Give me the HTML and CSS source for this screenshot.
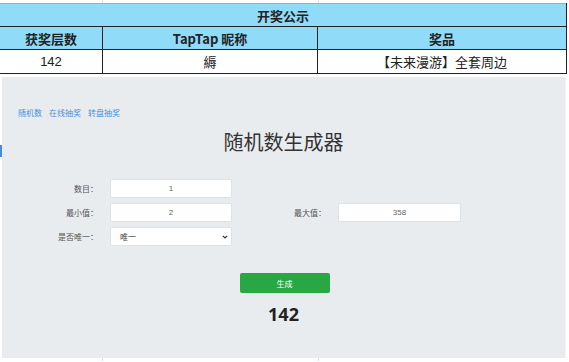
FILE: index.html
```html
<!DOCTYPE html>
<html lang="zh-CN">

<head>
    <meta charset="UTF-8">
    <meta name="viewport" content="width=device-width, initial-scale=1.0">
    <title>开奖公示</title>
    <link rel="stylesheet" href="styles.css">
</head>

<body>
    <div class='strip'>
        <span></span><span></span><span></span>
    </div>

    <table class='notice'>
        <tr>
            <th colspan="3" class='caption'>开奖公示</th>
        </tr>
        <tr>
            <th class='c1'>获奖层数</th>
            <th class='c2'>TapTap 昵称</th>
            <th class='c3'>奖品</th>
        </tr>
        <tr>
            <td>142</td>
            <td>縟</td>
            <td>【未来漫游】全套周边</td>
        </tr>
    </table>

    <section class='panel'>
        <nav class='links'>
            <a href="#">随机数</a>
            <a href="#">在线抽奖</a>
            <a href="#">转盘抽奖</a>
        </nav>

        <h1>随机数生成器</h1>

        <form class='form'>
            <label for='count'>数目：</label>
            <input type="text" id="count" value="1">
            <span></span><span></span>

            <label for='min'>最小值：</label>
            <input type="text" id="min" value="2">
            <label for='max'>最大值：</label>
            <input type="text" id="max" value="358">

            <label for='unique'>是否唯一：</label>
            <div class='select'>
                <select id="unique">
                    <option>唯一</option>
                    <option>不唯一</option>
                </select>
                <svg width="6" height="4" viewBox="0 0 6 4"><path d="M0.8 0.8 L3 3 L5.2 0.8" fill="none" stroke="#333" stroke-width="1.2"/></svg>
            </div>
        </form>

        <div class='actions'>
            <button type="button">生成</button>
            <div id="result">142</div>
        </div>
    </section>

    <div class='strip'>
        <span></span><span></span><span></span>
    </div>
</body>

</html>
```

FILE: styles.css
```css
body {
    margin: 0;
    background-color: #fff;
    font-family: "Liberation Sans", "Noto Sans CJK SC", sans-serif;
    color: #222;
}

.strip {
    display: flex;
    height: 3px;
    width: 567px;
}

.strip span {
    border-right: 1px solid #ddd;
}

.strip span:nth-child(1) {
    width: 102px;
}

.strip span:nth-child(2) {
    width: 215px;
}

.strip span:nth-child(3) {
    flex: 1;
    border-right: none;
}

.notice {
    border-collapse: collapse;
    width: 568px;
    margin-left: -1px;
    font-size: 13px;
}

.notice th,
.notice td {
    border: 1px solid #222;
    text-align: center;
    padding: 0;
    height: 22px;
}

.notice th {
    background-color: #8fdbf8;
    font-family: "Noto Sans CJK SC", sans-serif;
    font-weight: bold;
    font-size: 13px;
}

.notice .caption {
    border-top-color: #aaa;
}

.notice td {
    background-color: #fff;
    font-size: 13px;
    height: 23px;
}

.notice .c1 {
    width: 102px;
}

.notice .c2 {
    width: 214px;
}

.panel {
    position: relative;
    margin: 3px 0 0 2px;
    width: 564px;
    height: 281px;
    background-color: #e9ecef;
    border-right: 1px solid #f4f5f7;
    box-sizing: border-box;
    padding-top: 30px;
    font-family: "Noto Sans CJK SC", sans-serif;
}

/* focus mark on the left edge */
.panel::before {
    content: "";
    position: absolute;
    left: -2px;
    top: 68px;
    width: 2px;
    height: 12px;
    background-color: #4a8be0;
}

.links {
    display: flex;
    gap: 7px;
    padding-left: 16px;
    height: 11px;
    line-height: 11px;
}

.links a {
    font-size: 8px;
    color: #4a90e2;
    text-decoration: none;
}

h1 {
    margin: 10px 0 0;
    font-size: 20px;
    line-height: 28px;
    font-weight: normal;
    color: #333;
    text-align: center;
}

.form {
    display: grid;
    grid-template-columns: 108px 122px 106px 123px;
    grid-auto-rows: 19px;
    row-gap: 5px;
    margin-top: 23px;
    align-items: center;
}

.form label {
    font-size: 8px;
    color: #555;
    text-align: right;
    padding-right: 12px;
}

.form input,
.form select {
    display: block;
    height: 19px;
    width: 100%;
    margin: 0;
    box-sizing: border-box;
    border: 1px solid #e0e3e6;
    border-radius: 2px;
    background-color: #fff;
    font-size: 8px;
    color: #666;
    font-family: "Liberation Sans", "Noto Sans CJK SC", sans-serif;
}

.form input {
    text-align: center;
    padding: 0;
}

.select {
    position: relative;
    height: 19px;
}

.form select {
    appearance: none;
    -webkit-appearance: none;
    padding: 0 4px 0 9px;
    color: #444;
    font-family: "Noto Sans CJK SC", sans-serif;
}

.select svg {
    position: absolute;
    right: 4px;
    top: 8px;
    pointer-events: none;
}

.actions {
    display: flex;
    flex-direction: column;
    align-items: center;
    margin-top: 27px;
}

button {
    width: 90px;
    height: 20px;
    border: none;
    border-radius: 2px;
    background-color: #28a745;
    color: #fff;
    font-size: 8px;
    font-family: "Noto Sans CJK SC", sans-serif;
    margin-left: 2px;
}

#result {
    margin-top: 9px;
    font-family: "Open Sans", "Liberation Sans", sans-serif;
    font-weight: bold;
    font-size: 18px;
    color: #222;
}
```
